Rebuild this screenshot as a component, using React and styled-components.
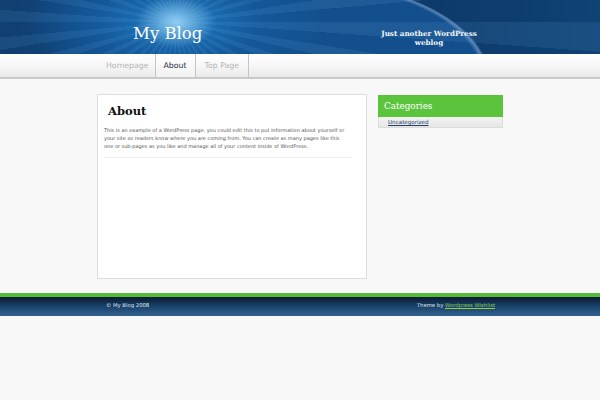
import React from "react";
import styled, { createGlobalStyle } from "styled-components";

const GlobalStyle = createGlobalStyle`
  html, body {
    margin: 0;
    padding: 0;
    background: #f8f8f8;
  }
  body {
    font-family: "DejaVu Sans", Verdana, sans-serif;
    width: 600px;
    height: 400px;
    overflow: hidden;
  }
`

const Header = styled.div`
  height: 54px;
  background:
    radial-gradient(ellipse 40px 26px at 176px 22px, rgba(170, 225, 255, 0.8), rgba(60, 150, 220, 0) 100%),
    repeating-conic-gradient(from 0deg at 176px 22px, rgba(120, 190, 245, 0.1) 0deg 4deg, rgba(120, 190, 245, 0) 4deg 9deg),
    radial-gradient(ellipse 150px 70px at 176px 22px, #1f7cc4 0%, #14589a 55%, rgba(16, 68, 124, 0) 100%),
    radial-gradient(ellipse 190px 100px at 300px 80px, #134f8c 0%, #134f8c 96%, rgba(120, 165, 215, 0.7) 98.5%, rgba(12, 53, 99, 0) 100%),
    linear-gradient(90deg, #103f72 0%, #114a84 40%, #0c3868 65%, #0f4275 100%);
  overflow: hidden;
`

const HeaderInner = styled.div`
  width: 406px;
  height: 100%;
  margin: 0 auto;
  display: flex;
  align-items: center;
  justify-content: space-between;
  box-sizing: border-box;
  padding: 12px 26px 0 36px;
`

const BlogTitle = styled.div`
  font-family: "DejaVu Serif", Georgia, serif;
  font-size: 16.5px;
  color: #ffffff;
`

const Tagline = styled.div`
  margin-top: 9px;
  font-family: "DejaVu Serif", Georgia, serif;
  font-weight: bold;
  font-size: 7.2px;
  line-height: 9px;
  width: 96px;
  text-align: center;
  color: #f4f6fa;
`

const NavBar = styled.div`
  height: 23px;
  background: linear-gradient(#ffffff 0%, #f6f6f6 55%, #e9e9e9 100%);
  border-bottom: 2px solid #c9c9c9;
`

const NavInner = styled.div`
  width: 406px;
  height: 100%;
  margin: 0 auto;
  display: flex;
  padding-left: 3px;
  box-sizing: border-box;
`

const Tab = styled.div`
  display: flex;
  align-items: center;
  padding: 0 ${p => p.$pad}px;
  font-size: 7.8px;
  color: ${p => (p.$active ? "#2b3240" : "#b4b4b4")};
  border-right: 1px solid #c4c4c4;
  background: ${p => (p.$active ? "linear-gradient(#ffffff, #f2f2f2)" : "transparent")};
`

const Main = styled.div`
  width: 406px;
  margin: 15px auto 0;
  display: flex;
  justify-content: space-between;
  align-items: flex-start;
`

const ContentBox = styled.div`
  width: 270px;
  height: 185px;
  box-sizing: border-box;
  background: #ffffff;
  border: 1px solid #dddddd;
  padding: 9px 14px 0 6px;
`

const PageTitle = styled.h2`
  margin: 0 0 8px 4px;
  font-family: "DejaVu Serif", Georgia, serif;
  font-weight: bold;
  font-size: 11.5px;
  color: #111111;
`

const Paragraph = styled.p`
  margin: 0;
  padding: 0 5px 7px 0;
  font-size: 5px;
  line-height: 8px;
  color: #555555;
  border-bottom: 1px solid #eeeeee;
`

const Sidebar = styled.div`
  width: 125px;
  margin-top: 1px;
`

const WidgetTitle = styled.div`
  height: 22px;
  display: flex;
  align-items: center;
  padding-left: 6px;
  background: #5cc43c;
  font-family: "DejaVu Serif", Georgia, serif;
  font-size: 8.8px;
  color: #ffffff;
`

const WidgetList = styled.div`
  height: 10px;
  padding-left: 9px;
  background: linear-gradient(#f3f3f3, #e6e6e6);
  border: 1px solid #dcdcdc;
  border-top: none;
  display: flex;
  align-items: center;
`

const WidgetLink = styled.a`
  font-size: 5.6px;
  color: #1f3f6a;
  text-decoration: underline;
`

const FooterStripe = styled.div`
  margin-top: 14px;
  height: 4px;
  background: #55bb38;
`

const Footer = styled.div`
  height: 19px;
  background: linear-gradient(#071b33 0%, #1d4670 55%, #33628f 100%);
`

const FooterInner = styled.div`
  width: 406px;
  height: 100%;
  margin: 0 auto;
  display: flex;
  align-items: center;
  justify-content: space-between;
  box-sizing: border-box;
  padding: 0 8px 3px 9px;
  font-size: 5.3px;
  color: #dfe6ee;
`

const FooterLink = styled.a`
  color: #8ccf3e;
  text-decoration: underline;
`

export default function App() {
  return (
    <>
      <GlobalStyle />
      <Header>
        <HeaderInner>
          <BlogTitle>My Blog</BlogTitle>
          <Tagline>Just another WordPress weblog</Tagline>
        </HeaderInner>
      </Header>
      <NavBar>
        <NavInner>
          <Tab $pad={6}>Homepage</Tab>
          <Tab $active $pad={8}>About</Tab>
          <Tab $pad={9}>Top Page</Tab>
        </NavInner>
      </NavBar>
      <Main>
        <ContentBox>
          <PageTitle>About</PageTitle>
          <Paragraph>
            This is an example of a WordPress page, you could edit this to put information about yourself or
            your site so readers know where you are coming from. You can create as many pages like this
            one or sub-pages as you like and manage all of your content inside of WordPress.
          </Paragraph>
        </ContentBox>
        <Sidebar>
          <WidgetTitle>Categories</WidgetTitle>
          <WidgetList>
            <WidgetLink href="#">Uncategorized</WidgetLink>
          </WidgetList>
        </Sidebar>
      </Main>
      <FooterStripe />
      <Footer>
        <FooterInner>
          <span>© My Blog 2008</span>
          <span>
            Theme by <FooterLink href="#">Wordpress Wishlist</FooterLink>
          </span>
        </FooterInner>
      </Footer>
    </>
  );
}
